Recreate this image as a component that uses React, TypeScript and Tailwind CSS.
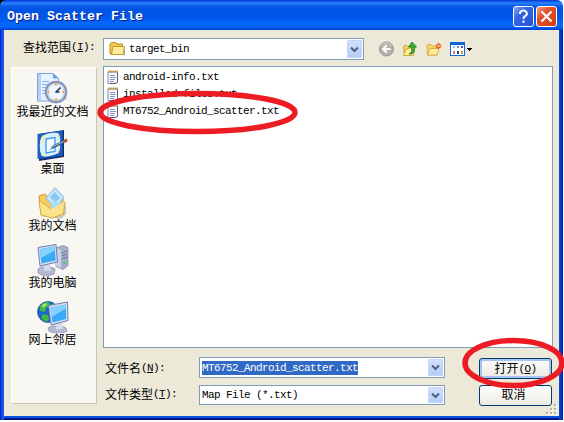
import React from 'react';

const mono = "font-['Liberation_Mono','Noto_Sans_CJK_SC',monospace] text-[11px] tracking-[-0.6px] leading-[14px] whitespace-pre";

const FieldLabel = ({ text, hotkey, className = '' }: { text: string; hotkey: string; className?: string }) => (
    <div className={`flex items-center whitespace-pre leading-[14px] ${className}`}>
        <span className="font-['Noto_Sans_CJK_SC',sans-serif] text-[12px]">{text}</span>
        <span className={mono}>(<span className="underline underline-offset-1">{hotkey}</span>):</span>
    </div>
);

const DropArrow = ({ className = '' }: { className?: string }) => (
    <div className={`flex items-center justify-center w-[15px] rounded-[1px] bg-gradient-to-b from-[#d3e0fd] to-[#b5cbf7] border border-[#c3d3fb] ${className}`}>
        <svg width="9" height="7" viewBox="0 0 9 7" fill="none">
            <path d="M1 1.500l3.500 3.500L8 1.500" stroke="#4d6185" strokeWidth="2" />
        </svg>
    </div>
);

const RecentIcon = () => (
    <svg width="32" height="32" viewBox="0 0 32 32">
        <path d="M0.500 0.500H16l5.500 5v22.500H0.500z" fill="#e9f2ff" stroke="#7da0e0" />
        <path d="M1 1h3v26H1z" fill="#b6cff6" />
        <path d="M16 0.500v5h5.500z" fill="#5f9fee" />
        <path d="M5 8.500h7M5 11.500h6M5 14.500h5M5 17.500h4M5 20.500h4" stroke="#7fb4f2" />
        <path d="M11 28c5 4 14 3 19-3l-2-3z" fill="#a9a9b5" opacity=".6" />
        <circle cx="19" cy="19" r="10.200" fill="#dfe9f6" stroke="#8796b5" strokeWidth="2.200" />
        <circle cx="19" cy="19" r="8" fill="#eef7ff" stroke="#c5d4e8" />
        <path d="M18.500 19.500l5-5M18.500 19h4" stroke="#28364f" strokeWidth="1.600" />
        <path d="M18 11.500h2M18 26.500h2M11.500 18v2M26.500 18v2" stroke="#f0a23c" strokeWidth="1.800" />
    </svg>
);

const DesktopIcon = () => (
    <svg width="32" height="32" viewBox="0 0 32 32">
        <path d="M2 4l25-4v27L2 31z" fill="#14306f" />
        <path d="M0.500 4L25.500 0.500v25L0.500 29z" fill="#1a5fca" />
        <path d="M5 6c5-3 12-4 16-3 3 5 3 15 0 20-5 3-12 4-16 3-3-5-3-15 0-20z" fill="#d3f1ff" />
        <path d="M3 12l2.500-6 5-2-4 5-1 6zM19 3l3 1 1.500 6-2-2zM3 20l2 6 5 .500-4-3zM23.500 17l-2 6-4 1.500 3-4z" fill="#f6edb0" />
        <path d="M9 9l9-1.500v14L9 23z" fill="#f5fcff" stroke="#3b9af0" strokeWidth="1.300" />
        <path d="M12 20l4-4 1.500 2z" fill="#38a2e8" />
        <path d="M15 17.500l12-6" stroke="#3d5476" strokeWidth="2.600" />
        <path d="M15 17l11.500-5.500" stroke="#9cc5ea" strokeWidth="1" />
        <path d="M26 10l4-1.500.500 3-3 1.500z" fill="#b5532e" />
    </svg>
);

const DocumentsIcon = () => (
    <svg width="32" height="32" viewBox="0 0 32 32">
        <path d="M5 29l19 3 5-5v-9z" fill="#9c9a92" opacity=".5" />
        <path d="M2 9l6-2 3 3 15 2v15H4z" fill="#f1cd63" stroke="#cd9e2d" />
        <path d="M9 11L18 0.800l9 9.500-8 12z" fill="#c6e6fc" stroke="#82b4e6" />
        <path d="M13 10l5-5 5 6-5 5z" fill="#8cc7f4" />
        <path d="M2 13l12 9 14-7-1.500 12L15 31 4 28z" fill="#fae38b" stroke="#d8a938" />
        <path d="M14 22l13-6.500" stroke="#fff4bd" />
        <path d="M13 21l5-8 5 4-7 4z" fill="#a8dcf8" opacity=".9" />
    </svg>
);

const ComputerIcon = () => (
    <svg width="32" height="32" viewBox="0 0 32 32">
        <path d="M19 4l7-2.500 5 2v18l-5 4-7-3z" fill="#a7aec9" stroke="#8086a5" strokeWidth=".7" />
        <path d="M19 4l5 2v18l-5-2z" fill="#c9d1e6" />
        <path d="M25 9l5-2M25 12l5-2M25 15l5-2" stroke="#6b7396" />
        <circle cx="27.500" cy="19" r="1.200" fill="#4acb4c" />
        <path d="M1 25c2-3 13-3 17 0l-1 5c-4 2-13 2-16-1z" fill="#b5b9d2" stroke="#8389aa" strokeWidth=".7" />
        <path d="M7 20l6 1 1 6-7-.500z" fill="#d5d9ea" />
        <path d="M1 3.500L19 0.500 20.500 18 3 22z" fill="#d5ddef" stroke="#6e80b4" />
        <path d="M2.800 5.300L17.500 2.500l1.200 14L4.500 19.500z" fill="#3aaaf6" />
        <path d="M2.800 5.300L17.500 2.500l.3 4L3.800 14z" fill="#83d1fc" />
    </svg>
);

const NetworkIcon = () => (
    <svg width="32" height="32" viewBox="0 0 32 32">
        <circle cx="11" cy="11" r="10.500" fill="#1d62cf" stroke="#164a9b" strokeWidth=".7" />
        <path d="M3 5c3-4 7-4 9-4l1 4-4 2-1 4-5-1zM6 13l5 1 1 5-3 2-5-4z" fill="#41b93c" />
        <path d="M5 4l4-2 1 2-4 3z" fill="#a7e17b" />
        <path d="M11 27c3-3 14-3 18 0l1 3c-5 3-13 3-18 0z" fill="#b5b9d2" stroke="#8389aa" strokeWidth=".7" />
        <path d="M18 22l7-1 1 7-7 .500z" fill="#d5d9ea" />
        <path d="M11.500 4.500L30.500 1 31 19.500 14 24z" fill="#d5ddef" stroke="#6e80b4" />
        <path d="M13.500 6.500L28.800 3.500l.4 14.500L15.500 21.500z" fill="#3aaaf6" />
        <path d="M13.500 6.500L28.800 3.500l.2 4L14.500 16z" fill="#83d1fc" />
    </svg>
);

const FolderIcon = () => (
    <svg width="17" height="16" viewBox="0 0 17 16">
        <path d="M2 14.500h12.500l1.500-9v9H3z" fill="#a2a09a" />
        <path d="M1 3l1.500-1.500h4L8 3h5.500v10.500H2L1 12z" fill="#f3c84d" stroke="#b78a22" />
        <path d="M4 5.500h11.500L14 13.500H2.500z" fill="#ffec9d" stroke="#c79a2d" />
    </svg>
);

const NoteIcon = () => (
    <svg width="12" height="14" viewBox="0 0 12 14">
        <path d="M1 2h9.500v9.500l-1.500 2H1z" fill="#f7f9ff" stroke="#7f86ae" />
        <path d="M10.500 3v9l-1.500 1.500H3" stroke="#55597b" fill="none" />
        <path d="M1 1.500h10" stroke="#c18d2e" strokeWidth="2" strokeDasharray="1.500 .8" />
        <path d="M3 5.500h5M3 7.500h6M3 9.500h5M3 11.500h4" stroke="#8a93b8" />
    </svg>
);

const BackIcon = () => (
    <svg width="16" height="16" viewBox="0 0 16 16">
        <circle cx="8.500" cy="8" r="7" fill="#b3b1a8" stroke="#99978f" />
        <path d="M3.500 5c2-4 8-4 10 0" stroke="#d0cec5" fill="none" />
        <path d="M12.500 8H5.500M8.800 4.200L5 8l3.800 3.800" stroke="#fff" strokeWidth="2" fill="none" />
    </svg>
);

const UpIcon = () => (
    <svg width="16" height="16" viewBox="0 0 16 16">
        <path d="M1.500 5.500l2-1.500 2 1.500H11v9H2.500z" fill="#f5d467" stroke="#cfa83a" />
        <path d="M1.500 14.500L4 8l9-2-1.500 8.500z" fill="#ffef9b" stroke="#d2aa3b" />
        <path d="M7 13c3-1 3-4 2.500-7H6.500L10 1l4.500 5h-2.500c1 4 0 7.500-5 7z" fill="#36b333" stroke="#16781c" strokeWidth=".8" />
    </svg>
);

const NewFolderIcon = () => (
    <svg width="16" height="16" viewBox="0 0 16 16">
        <path d="M1 4.500l1-1h3l1.500 1.500H11v9H1.500z" fill="#f5d467" stroke="#d5ae48" />
        <path d="M1.500 14L4 7.500h9L11 14z" fill="#ffed9d" stroke="#d5ae48" />
        <path d="M12.500 2v6M9.500 5h6M10.500 3l4 4M14.500 3l-4 4" stroke="#ec5333" strokeWidth="1.200" />
        <circle cx="12.500" cy="5" r="1.200" fill="#ffd070" />
    </svg>
);

const ViewsIcon = () => (
    <svg width="22" height="16" viewBox="0 0 22 16" shapeRendering="crispEdges">
        <path d="M0 1h15v14H0z" fill="#0f68d8" />
        <path d="M1 4h13v10H1z" fill="#fff" />
        <path d="M3 5h2v2H3z" fill="#aab9ce" />
        <path d="M7 5h2v2H7z" fill="#7a98c0" />
        <path d="M11 5h2v2h-2z" fill="#3d59a8" />
        <path d="M3 10h2v3H3z" fill="#e77b62" />
        <path d="M7 10h2v3H7z" fill="#1c3b9c" />
        <path d="M11 10h2v3h-2z" fill="#c1a446" />
        <path d="M17 7h5v1h-5zM18 8h3v1h-3zM19 9h1v1h-1z" fill="#000" />
    </svg>
);

const places = [
    { label: '我最近的文档', icon: <RecentIcon /> },
    { label: '桌面', icon: <DesktopIcon /> },
    { label: '我的文档', icon: <DocumentsIcon /> },
    { label: '我的电脑', icon: <ComputerIcon /> },
    { label: '网上邻居', icon: <NetworkIcon /> },
];

const files = ['android-info.txt', 'installed-files.txt', 'MT6752_Android_scatter.txt'];

const TitleBar = () => (
    <div className="flex items-center h-[30px] pl-[7px] pr-1.5 pt-[3px] rounded-t-[6px] bg-[linear-gradient(to_bottom,#0831d9_0,#1667f4_2px,#2b82fb_3px,#0a5cec_6px,#0054e3_9px,#0057ea_17px,#0568ff_24px,#0463fa_27px,#003dd0_30px)]">
        <span className="font-['Liberation_Mono',monospace] font-bold text-[13.33px] leading-[16px] text-white [text-shadow:1px_1px_0_#0a1883] whitespace-pre mt-px">Open Scatter File</span>
        <div className="flex gap-[2px] ml-auto">
            <div className="flex items-center justify-center w-[21px] h-[21px] rounded-[3px] border border-white bg-[linear-gradient(135deg,#8aa9f5,#3565e2_35%,#2254d6)]">
                <svg width="13" height="15" viewBox="0 0 13 15" fill="none">
                    <path d="M3 5V3.500Q4 1.500 6.500 1.500T10 4.500Q10 6 8 7.200 6.500 8 6.500 10M6.500 11.500v2.200" stroke="#fff" strokeWidth="2" />
                </svg>
            </div>
            <div className="flex items-center justify-center w-[21px] h-[21px] rounded-[3px] border border-white bg-[linear-gradient(135deg,#f0a58c,#e2532c_35%,#cf3d13)]">
                <svg width="13" height="13" viewBox="0 0 13 13" fill="none">
                    <path d="M1.500 1.500l10 10M11.500 1.500l-10 10" stroke="#fff" strokeWidth="2.200" />
                </svg>
            </div>
        </div>
    </div>
);

const App = () => {
    return (
        <div className="w-[564px] h-[422px] bg-white overflow-hidden text-black">
            <div className="relative w-[563px] h-[420px] bg-[#0a45de]">
                {/* Desktop showing behind the rounded corners */}
                <div className="bg-[linear-gradient(to_right,#000_50%,#fff_50%)]">
                    <TitleBar />
                </div>
                <div className="h-[390px] px-1 pb-1 bg-[linear-gradient(to_right,#0019cf_0,#0831d9_1px,#166aee_3px,#0855dd_4px,#0855dd_559px,#0441d8_560px,#001da0_563px)]">
                    <div className="flex flex-col h-[386px] bg-[#ece9d8] shadow-[0_2px_0_#0855dd,0_4px_0_#00138c]">
                        {/* Look-in row */}
                        <div className="flex items-start h-[36px] pt-2">
                            <FieldLabel text="查找范围" hotkey="I" className="w-[80px] ml-[19px] mt-[2px]" />
                            <div className="flex w-[261px] h-[22px] mr-[14px] border border-[#7f9db9] bg-white p-px">
                                <div className="flex items-center flex-1 pl-1 gap-[3px]">
                                    <FolderIcon />
                                    <span className={mono}>target_bin</span>
                                </div>
                                <DropArrow />
                            </div>
                            <div className="flex items-center gap-2 mt-[3px]">
                                <BackIcon />
                                <UpIcon />
                                <NewFolderIcon />
                                <ViewsIcon />
                            </div>
                        </div>

                        <div className="flex flex-1 pl-[7px]">
                            {/* Places bar */}
                            <div className="w-[86px] h-[337px] mt-px mr-[6px] pt-[5px] pr-[3px] bg-[#f8f7f2] border border-l-white border-t-white border-r-[#c9c7ba] border-b-[#c9c7ba]">
                                {places.map((place) => (
                                    <div key={place.label} className="flex flex-col items-center h-[57px]">
                                        {place.icon}
                                        <span className="font-['Noto_Sans_CJK_SC',sans-serif] text-[12px] leading-[13px] -mt-px whitespace-nowrap">{place.label}</span>
                                    </div>
                                ))}
                            </div>

                            <div className="w-[450px]">
                                {/* File list */}
                                <div className="h-[282px] border border-[#7f9db9] bg-white pt-[1px] pl-[3px]">
                                    {files.map((name) => (
                                        <div key={name} className="flex items-center gap-1 h-[17px]">
                                            <NoteIcon />
                                            <span className={mono}>{name}</span>
                                        </div>
                                    ))}
                                </div>

                                <div className="flex mt-[9px]">
                                    <div className="flex flex-col gap-[7px] w-[342px]">
                                        <div className="flex">
                                            <FieldLabel text="文件名" hotkey="N" className="w-[96px] pl-[2px]" />
                                            <div className="flex w-[246px] h-[21px] border border-[#7f9db9] bg-white p-px">
                                                <div className="flex items-center flex-1 pl-px">
                                                    <span className={`${mono} bg-[#316ac5] text-white`}>MT6752_Android_scatter.txt</span>
                                                </div>
                                                <DropArrow />
                                            </div>
                                        </div>
                                        <div className="flex">
                                            <FieldLabel text="文件类型" hotkey="T" className="w-[96px] pl-[2px] -mt-[3px]" />
                                            <div className="flex w-[246px] h-[20px] border border-[#7f9db9] bg-white p-px">
                                                <div className="flex items-center flex-1 pl-px">
                                                    <span className={mono}>Map File (*.txt)</span>
                                                </div>
                                                <DropArrow />
                                            </div>
                                        </div>
                                    </div>
                                    <div className="flex flex-col gap-[6px] ml-[34px] mt-px w-[73px]">
                                        <button className="flex items-center justify-center h-[21px] rounded-[3px] border border-[#003c74] bg-gradient-to-b from-[#fdfdfb] to-[#eceae0] shadow-[inset_0_0_0_2px_#a9c3f0]">
                                            <span className="font-['Noto_Sans_CJK_SC',sans-serif] text-[12px] leading-[14px] -mt-0.5">打开</span>
                                            <span className={mono}>(<span className="underline underline-offset-1">O</span>)</span>
                                        </button>
                                        <button className="flex items-center justify-center h-[21px] rounded-[3px] border border-[#003c74] bg-gradient-to-b from-white to-[#eceae0]">
                                            <span className="font-['Noto_Sans_CJK_SC',sans-serif] text-[12px] leading-[14px] -mt-1 -ml-1">取消</span>
                                        </button>
                                    </div>
                                </div>
                            </div>
                        </div>
                    </div>
                </div>

                {/* Resize grip */}
                <svg className="absolute left-[546px] top-[404px]" width="12" height="11" viewBox="0 0 12 11" shapeRendering="crispEdges">
                    <path d="M9 1h2v2H9zM5 5h2v2H5zM9 5h2v2H9zM1 9h2v2H1zM5 9h2v2H5zM9 9h2v2H9z" fill="#fff" />
                    <path d="M8 0h2v2H8zM4 4h2v2H4zM8 4h2v2H8zM0 8h2v2H0zM4 8h2v2H4zM8 8h2v2H8z" fill="#b8b4a3" />
                </svg>

                {/* Red marker rings */}
                <svg className="absolute left-0 top-0" width="564" height="422" viewBox="0 0 564 422" fill="none" stroke="#ed1c24" strokeWidth="5.500">
                    <ellipse cx="197.500" cy="112.500" rx="97.500" ry="19" />
                    <ellipse cx="513.500" cy="363" rx="48.500" ry="22.500" />
                </svg>
            </div>
        </div>
    );
};

export default App;
